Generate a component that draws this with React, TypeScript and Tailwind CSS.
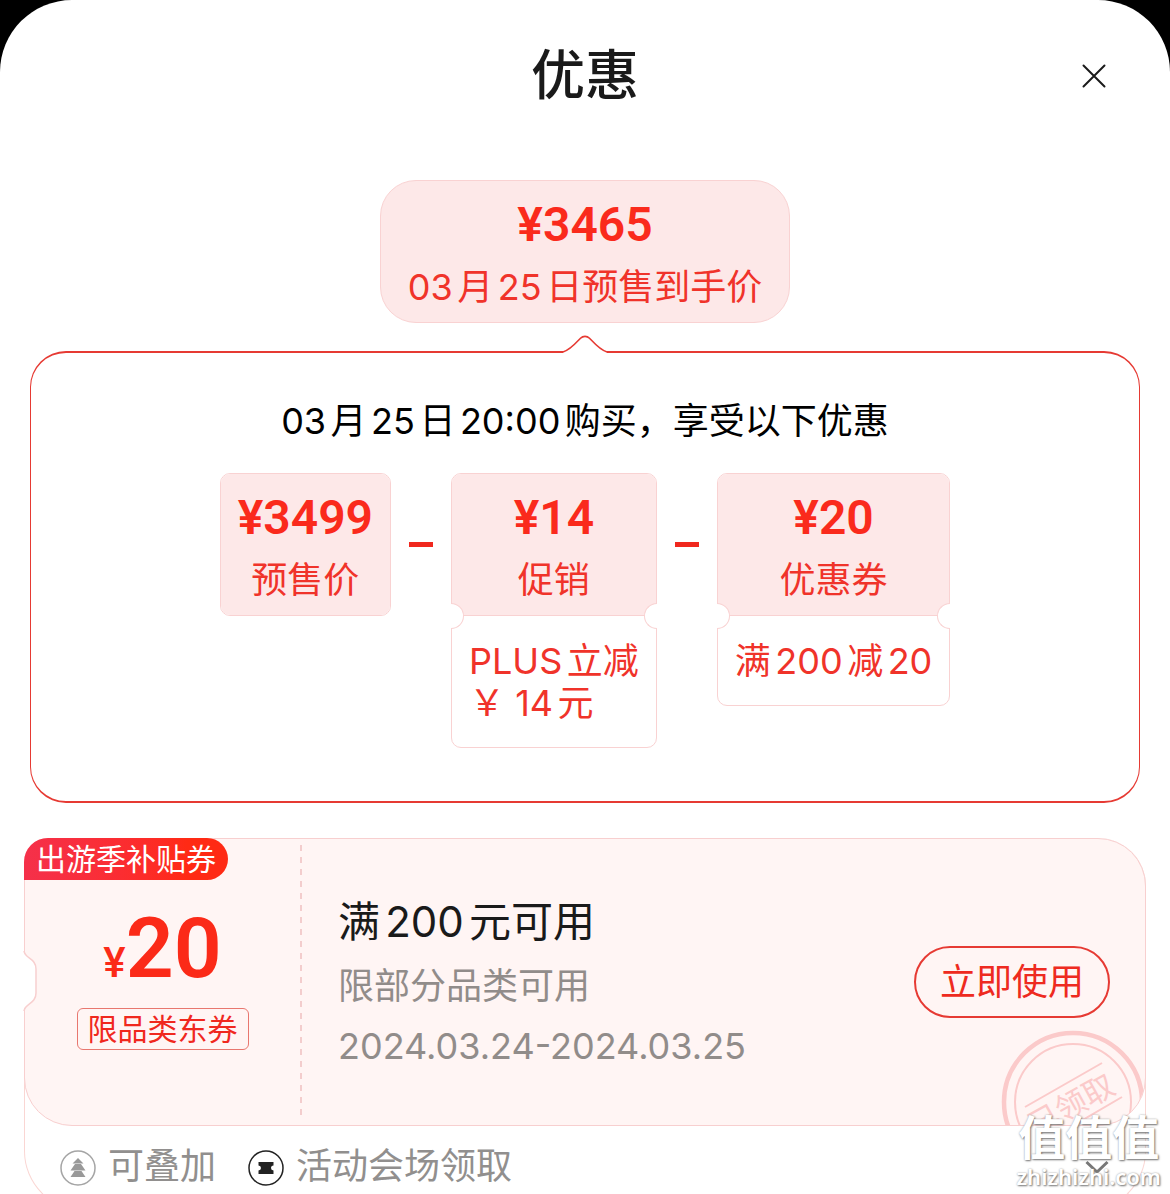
import type { ReactNode } from "react";

const YEN = "\u00a5";

function Amount({ value }: { value: string }) {
  return (
    <p className="font-[Roboto,sans-serif] text-[48px] leading-14 font-semibold text-[#fa2a1c]">
      {YEN}
      {value}
    </p>
  );
}

function PriceCard({ value, label, children }: { value: string; label: string; children?: ReactNode }) {
  return (
    <div className="rounded-[10px] border border-[#f9d2d2] text-[36px] text-[#f0332a]">
      <div className="rounded-t-[9px] bg-[#fde8e8] px-[17px] pt-4 pb-[9px] text-center last:rounded-b-[9px]">
        <Amount value={value} />
        <p className="mt-2 leading-[52px]">{label}</p>
      </div>
      {children && (
        <>
          <div className="relative border-t border-[#f9d2d2]">
            <span className="absolute -top-[13px] -left-px h-[26px] w-[13px] rounded-r-full border border-l-0 border-[#f9d2d2] bg-white" />
            <span className="absolute -top-[13px] -right-px h-[26px] w-[13px] rounded-l-full border border-r-0 border-[#f9d2d2] bg-white" />
          </div>
          <p className="px-[17px] pt-6 pb-[23px] leading-[42px]">{children}</p>
        </>
      )}
    </div>
  );
}

function Minus() {
  return (
    <div className="flex h-[143px] items-center">
      <span className="h-[5px] w-6 bg-[#f0281e]" />
    </div>
  );
}

function Stamp() {
  return (
    <svg className="absolute right-0 -bottom-[49px] size-[144px]" viewBox="0 0 144 144" fill="none" stroke="#fbcaca">
      <circle cx="72" cy="72" r="69" strokeWidth="4.500" />
      <circle cx="72" cy="72" r="58" strokeWidth="2" />
      <path d="M24 77L101 33M44 112L121 67" strokeWidth="2" />
      <text transform="rotate(-29 72 72)" x="69" y="85" textAnchor="middle" fontSize="31" fill="#fbcaca" stroke="none">
        已领取
      </text>
    </svg>
  );
}

export default function App() {
  return (
    <div className="h-screen overflow-hidden bg-black">
      <main
        className="relative h-full overflow-hidden rounded-t-[72px] bg-white font-[Inter,'Noto_Sans_CJK_SC',sans-serif] text-[#1a1a1a] [text-autospace:normal]"
        lang="zh-CN"
      >
        <header className="relative flex h-[152px] items-center justify-center">
          <h1 className="text-[54px] leading-none font-medium">优惠</h1>
          <button type="button" aria-label="关闭" className="absolute right-[60px] flex size-8 items-center justify-center">
            <svg className="size-6" viewBox="0 0 24 24" fill="none" stroke="#1a1a1a" strokeWidth="2" strokeLinecap="round">
              <path d="M1.500 1.500l21 21M22.500 1.500l-21 21" />
            </svg>
          </button>
        </header>

        <section className="mt-7 flex justify-center">
          <div className="rounded-[36px] border border-[#f9d2d2] bg-[#fde8e8] px-[27px] pt-4 pb-[9px] text-center text-[36px] text-[#f0332a]">
            <Amount value="3465" />
            <p className="mt-2 leading-[52px]">03月25日预售到手价</p>
          </div>
        </section>

        <section className="relative mx-[30px] mt-7 rounded-[36px] border border-y-2 border-[#e63a33] pt-11 pb-[53px]">
          <svg className="absolute -top-[18px] left-1/2 h-[19px] w-12 -translate-x-1/2" viewBox="0 0 48 19" fill="none">
            <path d="M2 15h44v4H2z" fill="#fff" />
            <path d="M0 17H2C9 15 14 9 19.500 3.200C22 0.700 26 0.700 28.500 3.200C34 9 39 15 46 17H48" fill="#fff" stroke="#e63a33" strokeWidth="1.600" />
          </svg>
          <h2 className="text-center text-[36px] leading-12 text-black">03月25日20:00购买，享受以下优惠</h2>
          <div className="mt-7 flex items-start justify-center gap-[18px]">
            <PriceCard value="3499" label="预售价" />
            <Minus />
            <PriceCard value="14" label="促销">
              PLUS立减
              <br />
              ￥ 14元
            </PriceCard>
            <Minus />
            <PriceCard value="20" label="优惠券">
              满200减20
            </PriceCard>
          </div>
        </section>

        <article className="relative mx-6 mt-[35px] rounded-t-[48px] rounded-b-[60px] border border-t-0 border-[#fad6d3]">
          <div className="relative -mx-px flex h-72 items-stretch overflow-hidden rounded-[48px] rounded-tl-[24px] border border-[#f8cfcf] bg-[#fff5f4]">
            <Stamp />
            <div className="flex w-[275px] flex-col items-center pt-[70px]">
              <p className="flex items-baseline font-[Roboto,sans-serif] leading-20 text-[#fb2a18]">
                <span className="text-[42px] font-medium">{YEN}</span>
                <span className="text-[84px] font-semibold">20</span>
              </p>
              <p className="mt-[5px] rounded-md border border-[#e8776f] px-2.5 text-[30px] leading-10 text-[#f0281e]">限品类东券</p>
            </div>
            <div className="my-1.5 w-0.5 bg-[repeating-linear-gradient(to_bottom,#f3cdcd_0_6px,transparent_6px_12px)]" />
            <div className="flex flex-1 flex-col justify-center pt-1 pl-9 text-[36px] leading-[60px] text-[#918c8a]">
              <h3 className="mb-1 text-[42px] text-[#1a1a1a]">满200元可用</h3>
              <p>限部分品类可用</p>
              <p>2024.03.24-2024.03.25</p>
            </div>
            <div className="relative flex items-center pr-[35px]">
              <button type="button" className="h-[72px] rounded-full border-2 border-[#e63a33] px-6 text-[36px] text-[#ee2a20]">
                立即使用
              </button>
            </div>
          </div>
          <p className="absolute top-0 -left-px rounded-l-[24px] rounded-r-[21px] rounded-bl-none bg-linear-to-r from-[#f5304a] to-[#ff2a14] to-80% px-3 text-[30px] leading-[42px] text-white">
            出游季补贴券
          </p>
          <svg className="absolute top-[113px] -left-0.5 h-[60px] w-4" viewBox="0 0 16 60" fill="none">
            <path d="M0 1H1C2 8 13 7 13 18V42C13 53 2 52 1 59H0Z" fill="#fff" />
            <path d="M1 0C2 8 13 7 13 18V42C13 53 2 52 1 60" stroke="#f8cfcf" strokeWidth="1.500" />
          </svg>
          <footer className="flex h-[84px] items-center pr-9 pl-[35px] text-[36px] text-[#918f8e]">
            <svg className="size-9" viewBox="0 0 36 36" fill="none">
              <circle cx="18" cy="18" r="17" stroke="#a5a5a5" strokeWidth="1.500" />
              <path d="M18 8l5.500 5.500h-11zM15 14h6l4.500 6.500h-15zM14.500 21h7l4 6h-15z" fill="#999" />
            </svg>
            <span className="ml-3 pb-1 leading-[52px]">可叠加</span>
            <svg className="ml-8 size-9" viewBox="0 0 36 36" fill="none">
              <circle cx="18" cy="18" r="17" stroke="#222" strokeWidth="1.500" />
              <path d="M10.500 12h15v3.500a2.500 2.500 0 0 0 0 5V24h-15v-3.500a2.500 2.500 0 0 0 0-5z" fill="#222" />
            </svg>
            <span className="ml-3 pb-1 leading-[52px]">活动会场领取</span>
            <button type="button" aria-label="展开" className="ml-auto">
              <svg className="h-4 w-6" viewBox="0 0 24 16" fill="none" stroke="#777" strokeWidth="3">
                <path d="M1.500 2L12 12L22.500 2" />
              </svg>
            </button>
          </footer>
        </article>

        <aside className="absolute right-[9px] bottom-1 text-center text-white [text-shadow:1px_1px_2px_#777,0_0_2px_#aaa]">
          <p className="text-[47px] leading-12 font-bold">值值值</p>
          <p className="font-['Noto_Sans',sans-serif] text-[22px] leading-7 font-semibold">zhizhizhi.com</p>
        </aside>
      </main>
    </div>
  );
}
